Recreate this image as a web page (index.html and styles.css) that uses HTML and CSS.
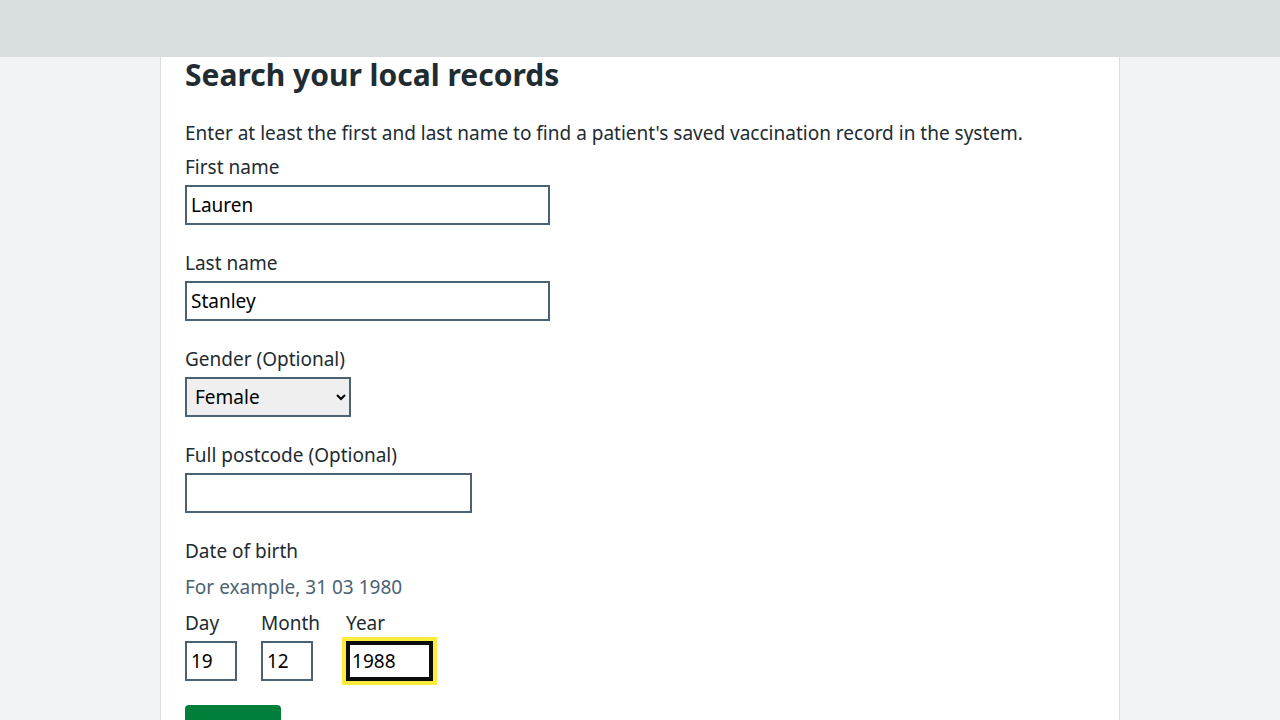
FILE: index.html
```html
<!DOCTYPE html>
<html lang="en">
<head>
<meta charset="utf-8">
<title>Search your local records</title>
<link rel="stylesheet" href="styles.css">
</head>
<body>
<header class="site-header"></header>
<div class="page">
  <main class="card">
    <h1 class="title">Search your local records</h1>
    <p class="intro">Enter at least the first and last name to find a patient's saved vaccination record in the system.</p>
    <div class="form-group">
      <label class="label" for="first">First name</label>
      <input class="input input-name" id="first" type="text" value="Lauren">
    </div>
    <div class="form-group">
      <label class="label" for="last">Last name</label>
      <input class="input input-name" id="last" type="text" value="Stanley">
    </div>
    <div class="form-group">
      <label class="label" for="gender">Gender (Optional)</label>
      <select class="select" id="gender">
        <option>Female</option>
        <option>Male</option>
      </select>
    </div>
    <div class="form-group">
      <label class="label" for="postcode">Full postcode (Optional)</label>
      <input class="input input-postcode" id="postcode" type="text" value="">
    </div>
    <fieldset class="form-group fieldset">
      <legend class="legend">Date of birth</legend>
      <div class="hint">For example, 31 03 1980</div>
      <div class="date">
        <div class="date-item">
          <label class="label label-date" for="day">Day</label>
          <input class="input input-2" id="day" type="text" value="19">
        </div>
        <div class="date-item">
          <label class="label label-date" for="month">Month</label>
          <input class="input input-2" id="month" type="text" value="12">
        </div>
        <div class="date-item date-item-year">
          <label class="label label-date" for="year">Year</label>
          <input class="input input-4 focused" id="year" type="text" value="1988">
        </div>
      </div>
    </fieldset>
    <button class="button" type="button">Search</button>
  </main>
</div>
</body>
</html>
```

FILE: styles.css
```css
html, body {
  margin: 0;
  padding: 0;
}
body {
  background: #f0f4f5;
  font-family: "Noto Sans", "Liberation Sans", sans-serif;
  color: #212b32;
  font-size: 19px;
  line-height: 28px;
}
.site-header {
  height: 57px;
  background: #d8dde0;
}
.page {
  display: flex;
  justify-content: center;
}
.card {
  width: 960px;
  box-sizing: border-box;
  background: #fff;
  border-left: 1px solid #d8dde0;
  border-right: 1px solid #d8dde0;
  padding: 0 24px 40px;
}
.title {
  margin: -2px 0 24px;
  font-size: 30px;
  line-height: 40px;
  font-weight: 700;
}
.intro {
  margin: 0 0 6px;
}
.form-group {
  margin: 0 0 24px;
}
.label {
  display: block;
  margin-bottom: 4px;
}
.input {
  display: block;
  box-sizing: border-box;
  height: 40px;
  border: 2px solid #4c6272;
  border-radius: 0;
  padding: 4px;
  font-family: inherit;
  font-size: 19px;
  color: #000;
  background: #fff;
  margin: 0;
}
.input-name { width: 365px; }
.input-postcode { width: 287px; }
.input-2 { width: 52px; }
.input-4 { width: 87px; }
.date-item-year { margin-left: 2px; }
.focused {
  border-color: #0b0c0c;
  box-shadow: inset 0 0 0 2px #0b0c0c;
  outline: 4px solid #ffeb3b;
  outline-offset: 0;
}
.select {
  display: block;
  box-sizing: border-box;
  width: 166px;
  height: 40px;
  border: 2px solid #4c6272;
  border-radius: 0;
  padding: 0 4px;
  font-family: inherit;
  font-size: 19px;
  color: #000;
  background: #efefef;
}
.fieldset {
  border: 0;
  padding: 0;
  min-width: 0;
}
.legend {
  padding: 0;
  margin-bottom: 8px;
}
.hint {
  color: #4c6272;
  margin-bottom: 8px;
}
.date {
  display: flex;
  gap: 24px;
}
.date-item {
  display: flex;
  flex-direction: column;
  align-items: flex-start;
}
.button {
  display: block;
  width: 96px;
  padding: 12px 16px;
  border: 0;
  border-radius: 4px;
  background: #007f3b;
  color: #fff;
  font-family: inherit;
  font-size: 19px;
  line-height: 28px;
  font-weight: 600;
  box-shadow: 0 4px 0 #00401e;
}
```
